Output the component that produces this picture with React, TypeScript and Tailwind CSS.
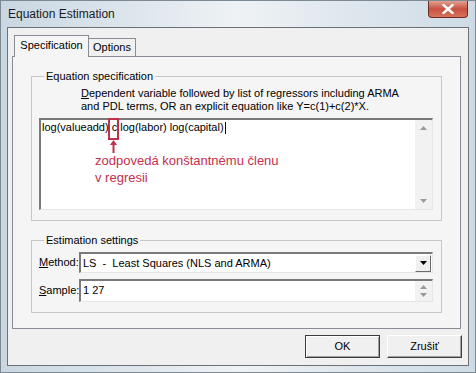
import React from "react";

function ScrollArrow({ up, dark }: { up: boolean; dark?: boolean }) {
  return (
    <svg width="7" height="4" viewBox="0 0 7 4" className="block">
      <path
        d={up ? "M0 4 L3.5 0 L7 4 Z" : "M0 0 L3.5 4 L7 0 Z"}
        fill={dark ? "#000" : "#9a9a9a"}
      />
    </svg>
  );
}

function Fieldset({
  title,
  className,
  children,
}: {
  title: string;
  className?: string;
  children: React.ReactNode;
}) {
  return (
    <fieldset
      className={`w-[411px] border border-[#c4c8cc] ${className ?? ""}`}
    >
      <legend className="ml-[5px] px-[2px] leading-[13px]">{title}</legend>
      {children}
    </fieldset>
  );
}

export default function App() {
  return (
    <div className="relative h-[373px] w-[476px] overflow-hidden border border-[#7d8a94] bg-gradient-to-r from-[#c9d7e2] via-[#eef2f5] to-[#cedbe5] font-['Liberation_Sans',Arial,sans-serif] text-[11px] text-black">
      {/* title bar */}
      <div className="flex h-[26px] items-start justify-between pl-[7px]">
        <span className="mt-[6px] text-[12px] leading-[15px] text-[#1b1b1b]">
          Equation Estimation
        </span>
        <div className="mr-[7px] flex h-[17px] w-[40px] items-center justify-center rounded-b-[4px] border border-t-0 border-[#6e2a24] bg-gradient-to-b from-[#e0a192] via-[#c8503f] to-[#d8735c]">
          <svg width="12" height="10" viewBox="0 0 12 10">
            <path
              d="M1.5 1 L10.5 9 M10.5 1 L1.5 9"
              stroke="#fff"
              strokeWidth="2.4"
              strokeLinecap="square"
            />
          </svg>
        </div>
      </div>

      {/* client area */}
      <div className="ml-[6px] flex h-[339px] w-[462px] flex-col border border-[#6c7177] bg-[#f0f0f0] px-[5px] pt-[7px]">
        {/* tabs */}
        <div className="flex h-[21px] items-end pl-[1px]">
          <div className="relative z-10 -mb-px flex h-[22px] w-[75px] items-center justify-center border border-b-0 border-[#898c95] bg-[#f5f5f5] pb-[2px]">
            Specification
          </div>
          <div className="flex h-[18px] w-[47px] items-center justify-center border border-b-0 border-l-0 border-[#898c95] bg-[#f0f0f0]">
            Options
          </div>
        </div>

        {/* tab panel */}
        <div className="h-[273px] w-[449px] -ml-px border border-[#898c95] bg-[#f5f5f5] pl-[18px] pt-[13px]">
          <Fieldset title="Equation specification" className="px-[7px] pb-[10px] pt-[4px]">
            <div className="pl-[42px] leading-[13px]">
              <div>
                <span className="underline">D</span>ependent variable followed
                by list of regressors including ARMA
              </div>
              <div>and PDL terms, OR an explicit equation like Y=c(1)+c(2)*X.</div>
            </div>
            <div className="relative mt-[5px] flex h-[92px] w-[394px] border-l-2 border-t-2 border-b border-r border-l-[#7a7a7a] border-t-[#7a7a7a] border-b-[#e6e6e6] border-r-[#e6e6e6] bg-white">
              <div className="flex-1 pl-[1px] pt-[1px] leading-[13px]">
                <div className="flex items-center">
                  <span>log(valueadd) c log(labor) log(capital)</span>
                  <span className="ml-[1px] h-[12px] w-px bg-black" />
                </div>
                <div className="mt-[18px] pl-[53px] text-[13px] leading-[17px] text-[#c3304c]">
                  <div>zodpovedá konštantnému členu</div>
                  <div>v regresii</div>
                </div>
              </div>
              <div className="flex w-[17px] flex-col items-center justify-between bg-[#f2f2f2] py-[6px]">
                <ScrollArrow up />
                <ScrollArrow up={false} />
              </div>
              {/* annotation box and arrow */}
              <div className="absolute left-[67px] top-[-2px] h-[22px] w-[11px] border-2 border-[#c3304c]" />
              <svg
                className="absolute left-[69px] top-[20px]"
                width="7"
                height="13"
                viewBox="0 0 7 13"
              >
                <path d="M3.5 0 L7 5 L0 5 Z" fill="#c3304c" />
                <path d="M3.5 4 L3.5 13" stroke="#c3304c" strokeWidth="2" />
              </svg>
            </div>
          </Fieldset>

          <Fieldset title="Estimation settings" className="mt-[13px] px-[7px] pb-[10px] pt-[5px]">
            <div className="flex h-[21px] items-center">
              <span className="w-[40px]">
                <span className="underline">M</span>ethod:
              </span>
              <div className="flex h-[21px] w-[354px] items-center border-l-2 border-t-2 border-b border-r border-l-[#7a7a7a] border-t-[#7a7a7a] border-b-[#e6e6e6] border-r-[#e6e6e6] bg-white">
                <span className="flex-1 whitespace-pre pl-[2px]">
                  LS  -  Least Squares (NLS and ARMA)
                </span>
                <div className="mr-[1px] flex h-[17px] w-[16px] items-center justify-center border border-l-[#fff] border-t-[#fff] border-b-[#6a6a6a] border-r-[#6a6a6a] bg-[#f0f0f0]">
                  <ScrollArrow up={false} dark />
                </div>
              </div>
            </div>
            <div className="mt-[6px] flex h-[23px] items-center">
              <span className="w-[40px]">
                <span className="underline">S</span>ample:
              </span>
              <div className="flex h-[23px] w-[354px] border-l-2 border-t-2 border-b border-r border-l-[#7a7a7a] border-t-[#7a7a7a] border-b-[#e6e6e6] border-r-[#e6e6e6] bg-white">
                <span className="flex-1 pl-[2px] pt-[1px]">1 27</span>
                <div className="flex w-[17px] flex-col items-center justify-between bg-[#f2f2f2] py-[4px]">
                  <ScrollArrow up />
                  <ScrollArrow up={false} />
                </div>
              </div>
            </div>
          </Fieldset>
        </div>

        {/* buttons */}
        <div className="mt-[6px] flex justify-end gap-[7px] pr-[1px]">
          <button className="h-[23px] w-[75px] border border-[#3c3c3c] bg-[#f0f0f0] shadow-[inset_1px_1px_0_#fff,inset_-1px_-1px_0_#a0a0a0]">
            OK
          </button>
          <button className="h-[23px] w-[75px] border border-l-[#fff] border-t-[#fff] border-b-[#404040] border-r-[#404040] bg-[#f0f0f0] shadow-[inset_-1px_-1px_0_#a0a0a0]">
            Zrušiť
          </button>
        </div>
      </div>
    </div>
  );
}
